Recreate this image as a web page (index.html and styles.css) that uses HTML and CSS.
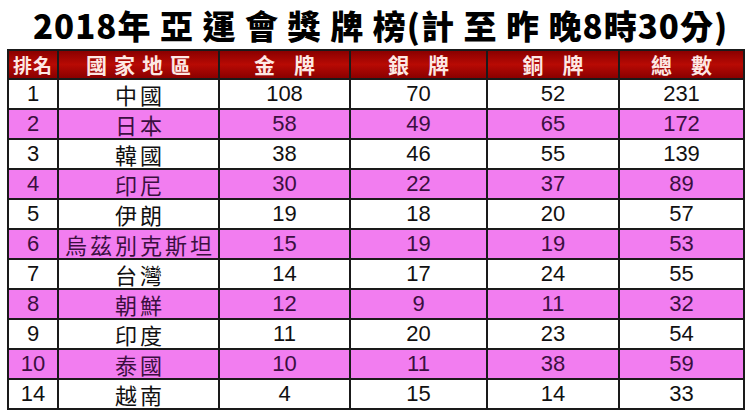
FILE: index.html
```html
<!DOCTYPE html>
<html lang="zh-Hant">
<head>
<meta charset="utf-8">
<link rel="stylesheet" href="styles.css">
</head>
<body>
<div class="page">
  <h1 class="title">2018年 亞 運 會 獎 牌 榜(計 至 昨 晚8時30分)</h1>
  <table class="medals">
    <colgroup>
      <col class="c1"><col class="c2"><col class="c3"><col class="c4"><col class="c5"><col class="c6">
    </colgroup>
    <thead>
      <tr>
        <th class="h-rank">排名</th>
        <th class="h-wide">國家地區</th>
        <th class="h-wide">金 牌</th>
        <th class="h-wide">銀 牌</th>
        <th class="h-wide">銅 牌</th>
        <th class="h-wide">總 數</th>
      </tr>
    </thead>
    <tbody>
      <tr><td>1</td><td class="cn">中國</td><td>108</td><td>70</td><td>52</td><td>231</td></tr>
      <tr class="pink"><td>2</td><td class="cn">日本</td><td>58</td><td>49</td><td>65</td><td>172</td></tr>
      <tr><td>3</td><td class="cn">韓國</td><td>38</td><td>46</td><td>55</td><td>139</td></tr>
      <tr class="pink"><td>4</td><td class="cn">印尼</td><td>30</td><td>22</td><td>37</td><td>89</td></tr>
      <tr><td>5</td><td class="cn">伊朗</td><td>19</td><td>18</td><td>20</td><td>57</td></tr>
      <tr class="pink"><td>6</td><td class="cn">烏茲別克斯坦</td><td>15</td><td>19</td><td>19</td><td>53</td></tr>
      <tr><td>7</td><td class="cn">台灣</td><td>14</td><td>17</td><td>24</td><td>55</td></tr>
      <tr class="pink"><td>8</td><td class="cn">朝鮮</td><td>12</td><td>9</td><td>11</td><td>32</td></tr>
      <tr><td>9</td><td class="cn">印度</td><td>11</td><td>20</td><td>23</td><td>54</td></tr>
      <tr class="pink"><td>10</td><td class="cn">泰國</td><td>10</td><td>11</td><td>38</td><td>59</td></tr>
      <tr><td>14</td><td class="cn">越南</td><td>4</td><td>15</td><td>14</td><td>33</td></tr>
    </tbody>
  </table>
</div>
</body>
</html>
```
FILE: styles.css
```css
html, body {
  margin: 0;
  padding: 0;
  background: #ffffff;
}
.page {
  width: 748px;
  height: 417px;
  padding: 0 0 0 7px;
  box-sizing: border-box;
  overflow: hidden;
}
.title {
  margin: 0;
  height: 48px;
  line-height: 50px;
  padding-left: 26px;
  font-family: "Noto Sans CJK TC", "Noto Sans CJK SC", sans-serif;
  font-weight: 900;
  font-size: 33px;
  letter-spacing: 1px;
  color: #000;
  white-space: nowrap;
}
.medals {
  border-collapse: collapse;
  width: 736px;
  table-layout: fixed;
  margin-top: 1px;
}
.c1 { width: 50px; }
.c2 { width: 161px; }
.c3 { width: 131px; }
.c4 { width: 137px; }
.c5 { width: 132px; }
.c6 { width: 125px; }
.medals th,
.medals td {
  border: 2px solid #1a1a1a;
  padding: 0;
  text-align: center;
  vertical-align: middle;
}
.medals th {
  height: 27px;
  background: linear-gradient(#8a0000, #b80a04 50%, #8a0000);
  color: #fde8e4;
  font-family: "Noto Sans CJK TC", "Noto Sans CJK SC", sans-serif;
  font-weight: 700;
  font-size: 21px;
  line-height: 27px;
}
.medals th.h-wide {
  letter-spacing: 7px;
  text-indent: 7px;
}
.medals th.h-rank {
  font-size: 19px;
  letter-spacing: 1px;
}
.medals td {
  height: 28px;
  font-family: "Liberation Sans", Arial, sans-serif;
  font-size: 22px;
  line-height: 28px;
  color: #111;
}
.medals td.cn {
  font-family: "Noto Sans CJK TC", "Noto Sans CJK SC", sans-serif;
  font-size: 22px;
  letter-spacing: 3px;
  text-indent: 3px;
}
.medals tr.pink td {
  background: #f27df0;
  color: #3b0f40;
}
```
